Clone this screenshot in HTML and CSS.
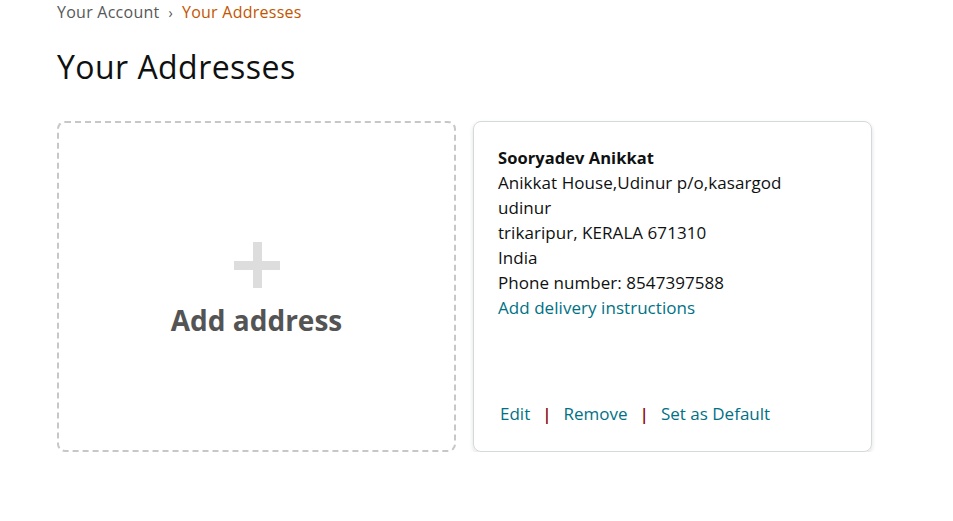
FILE: index.html
```html
<!DOCTYPE html>
<html>
<head>
<meta charset="utf-8">
<link rel="stylesheet" href="styles.css">
</head>
<body>
<div class="page">
  <nav class="crumbs">
    <a class="crumb" href="#">Your Account</a>
    <span class="sep">›</span>
    <span class="crumb current">Your Addresses</span>
  </nav>
  <h1 class="title">Your Addresses</h1>
  <div class="grid">
    <a class="card add-card" href="#">
      <span class="plus"></span>
      <span class="add-label">Add address</span>
    </a>
    <div class="card addr-card">
      <div class="addr">
        <div class="name">Sooryadev Anikkat</div>
        <div>Anikkat House,Udinur p/o,kasargod</div>
        <div>udinur</div>
        <div>trikaripur, KERALA 671310</div>
        <div>India</div>
        <div>Phone number: 8547397588</div>
        <a class="link" href="#">Add delivery instructions</a>
      </div>
      <div class="actions">
        <a class="link" href="#">Edit</a>
        <span class="bar">|</span>
        <a class="link" href="#">Remove</a>
        <span class="bar">|</span>
        <a class="link" href="#">Set as Default</a>
      </div>
    </div>
  </div>
</div>
</body>
</html>
```
FILE: styles.css
```css
html, body {
  margin: 0;
  padding: 0;
  background: #fff;
}
body {
  font-family: "Open Sans", "Noto Sans", sans-serif;
  color: #0f1111;
}
.page {
  padding: 0 0 0 57px;
}
.crumbs {
  display: flex;
  align-items: center;
  gap: 9px;
  height: 25px;
  font-size: 16px;
  letter-spacing: 0.25px;
  line-height: 25px;
}
.crumb {
  color: #565959;
  text-decoration: none;
}
.crumb.current {
  color: #c45500;
}
.sep {
  color: #555;
  font-size: 14px;
}
.title {
  margin: 20px 0 0;
  font-size: 32px;
  font-weight: 400;
  letter-spacing: 0.45px;
  line-height: 44px;
  color: #0f1111;
}
.grid {
  display: grid;
  grid-template-columns: 399px 399px;
  gap: 17px;
  margin-top: 32px;
}
.card {
  box-sizing: border-box;
  height: 331px;
  border-radius: 8px;
}
.add-card {
  border: 2px dashed #c7c7c7;
  display: flex;
  flex-direction: column;
  align-items: center;
  justify-content: center;
  text-decoration: none;
  padding-top: 6px;
}
.plus {
  position: relative;
  width: 46px;
  height: 46px;
}
.plus::before, .plus::after {
  content: "";
  position: absolute;
  background: #dddddd;
}
.plus::before {
  left: 19px;
  top: 0;
  width: 9px;
  height: 46px;
}
.plus::after {
  top: 19px;
  left: 0;
  height: 9px;
  width: 46px;
}
.add-label {
  margin-top: 14px;
  font-size: 28px;
  font-weight: 700;
  color: #545454;
  line-height: 36px;
}
.addr-card {
  border: 1px solid #d5d9d9;
  box-shadow: 0 2px 4px rgba(0,0,0,0.13);
  padding: 23px 24px 24px 24px;
  display: flex;
  flex-direction: column;
  justify-content: space-between;
}
.addr {
  font-size: 17px;
  letter-spacing: 0.05px;
  line-height: 25px;
  display: flex;
  flex-direction: column;
  align-items: flex-start;
}
.name {
  font-weight: 700;
  font-size: 16.5px;
}
.link {
  color: #007185;
  text-decoration: none;
}
.actions {
  display: flex;
  align-items: center;
  gap: 12px;
  font-size: 17px;
  line-height: 26px;
  padding-left: 2px;
}
.bar {
  color: #8b0000;
  font-size: 17px;
  font-weight: 600;
}
```
